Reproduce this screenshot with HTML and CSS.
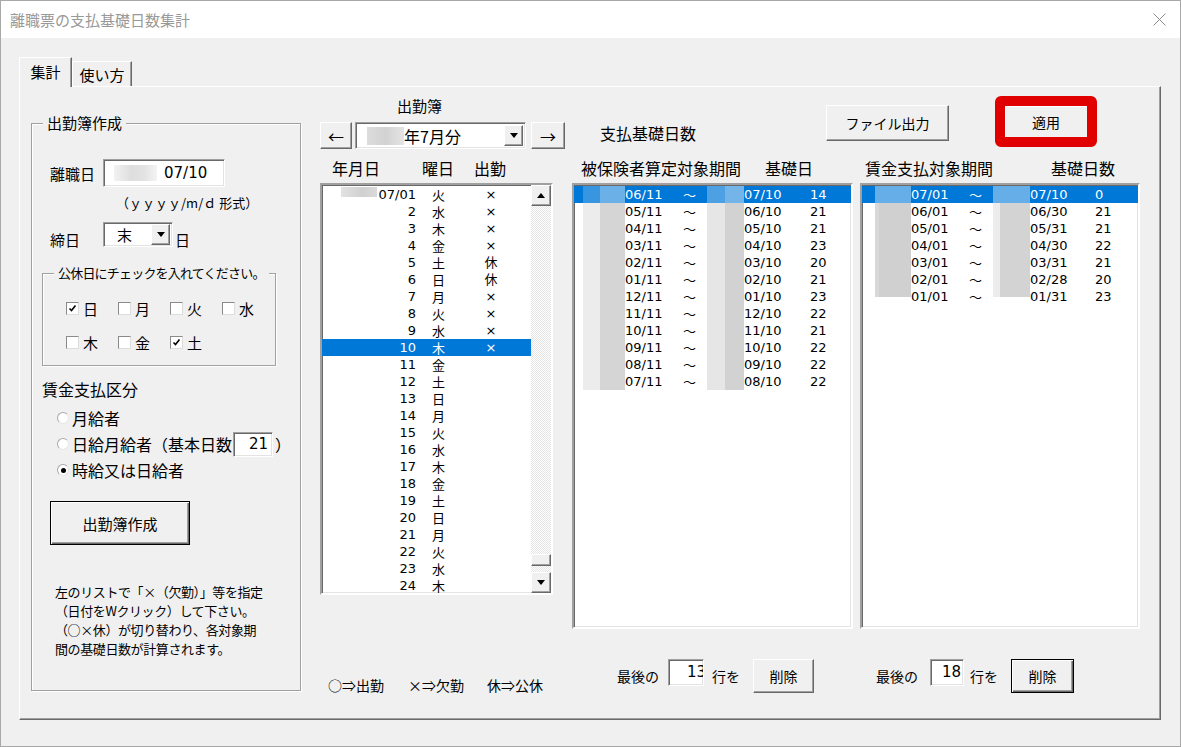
FILE: index.html
```html
<!DOCTYPE html>
<html lang="ja">
<head>
<meta charset="utf-8">
<title>離職票の支払基礎日数集計</title>
<link rel="stylesheet" href="styles.css">
</head>
<body>
<div class="window">
  <div class="titlebar">
    <span class="title">離職票の支払基礎日数集計</span>
    <svg class="close" width="13" height="13" viewBox="0 0 13 13"><path d="M0.5 0.5L12.5 12.5M12.5 0.5L0.5 12.5" stroke="#8c8c8c" stroke-width="1" fill="none"/></svg>
  </div>
  <div class="client">
    <div class="tabs">
      <div class="tab active">集計</div>
      <div class="tab">使い方</div>
    </div>
    <div class="page">

      <!-- left: 出勤簿作成 -->
      <div class="group main-group">
        <span class="legend">出勤簿作成</span>
        <div class="field-row">
          <span class="lbl">離職日</span>
          <div class="textbox date-box"><i class="blur blur-date"></i><span>07/10</span></div>
        </div>
        <div class="hint">（ｙｙｙｙ/m/ｄ 形式）</div>
        <div class="field-row shime-row">
          <span class="lbl lbl-low">締日</span>
          <div class="combo shime-combo">
            <span class="combo-text">末</span>
            <span class="drop-btn"><svg width="8" height="5" viewBox="0 0 8 5"><polygon points="0,0 8,0 4,5" fill="#000"/></svg></span>
          </div>
          <span class="lbl-low after">日</span>
        </div>

        <div class="group holiday-group">
          <span class="legend small">公休日にチェックを入れてください。</span>
          <div class="checks">
            <label class="check"><span class="box on"><svg width="9" height="9" viewBox="0 0 9 9"><path d="M1.5 4.5L3.5 6.5L7.5 1.5" stroke="#000" stroke-width="1.6" fill="none"/></svg></span>日</label>
            <label class="check"><span class="box"></span>月</label>
            <label class="check"><span class="box"></span>火</label>
            <label class="check"><span class="box"></span>水</label>
            <label class="check"><span class="box"></span>木</label>
            <label class="check"><span class="box"></span>金</label>
            <label class="check"><span class="box on"><svg width="9" height="9" viewBox="0 0 9 9"><path d="M1.5 4.5L3.5 6.5L7.5 1.5" stroke="#000" stroke-width="1.6" fill="none"/></svg></span>土</label>
          </div>
        </div>

        <div class="section-title">賃金支払区分</div>
        <div class="radios">
          <div class="radio-row"><span class="radio"></span>月給者</div>
          <div class="radio-row"><span class="radio"></span>日給月給者（基本日数<div class="textbox days-box">21</div><span class="paren">）</span></div>
          <div class="radio-row"><span class="radio on"></span>時給又は日給者</div>
        </div>
        <div class="btn default make-btn">出勤簿作成</div>
        <p class="note">左のリストで「×（欠勤）」等を指定<br>（日付をWクリック）して下さい。<br>（○×休）が切り替わり、各対象期<br>間の基礎日数が計算されます。</p>
      </div>

      <!-- middle: 出勤簿 -->
      <div class="book">
        <div class="book-title">出勤簿</div>
        <div class="nav-row">
          <div class="btn arrow">←</div>
          <div class="combo month-combo">
            <i class="blur blur-month"></i><span class="combo-text">年7月分</span>
            <span class="drop-btn"><svg width="8" height="5" viewBox="0 0 8 5"><polygon points="0,0 8,0 4,5" fill="#000"/></svg></span>
          </div>
          <div class="btn arrow">→</div>
        </div>
        <div class="heads book-heads"><span class="h-date">年月日</span><span class="h-wd">曜日</span><span>出勤</span></div>
        <div class="listbox day-list">
          <div class="rows">
            <div class="day-row"><span class="c-date"><i class="blur blur-year"></i>07/01</span><span class="c-wd">火</span><span class="c-att">×</span></div>
            <div class="day-row"><span class="c-date">2</span><span class="c-wd">水</span><span class="c-att">×</span></div>
            <div class="day-row"><span class="c-date">3</span><span class="c-wd">木</span><span class="c-att">×</span></div>
            <div class="day-row"><span class="c-date">4</span><span class="c-wd">金</span><span class="c-att">×</span></div>
            <div class="day-row"><span class="c-date">5</span><span class="c-wd">土</span><span class="c-att">休</span></div>
            <div class="day-row"><span class="c-date">6</span><span class="c-wd">日</span><span class="c-att">休</span></div>
            <div class="day-row"><span class="c-date">7</span><span class="c-wd">月</span><span class="c-att">×</span></div>
            <div class="day-row"><span class="c-date">8</span><span class="c-wd">火</span><span class="c-att">×</span></div>
            <div class="day-row"><span class="c-date">9</span><span class="c-wd">水</span><span class="c-att">×</span></div>
            <div class="day-row sel"><span class="c-date">10</span><span class="c-wd">木</span><span class="c-att">×</span></div>
            <div class="day-row"><span class="c-date">11</span><span class="c-wd">金</span><span class="c-att"></span></div>
            <div class="day-row"><span class="c-date">12</span><span class="c-wd">土</span><span class="c-att"></span></div>
            <div class="day-row"><span class="c-date">13</span><span class="c-wd">日</span><span class="c-att"></span></div>
            <div class="day-row"><span class="c-date">14</span><span class="c-wd">月</span><span class="c-att"></span></div>
            <div class="day-row"><span class="c-date">15</span><span class="c-wd">火</span><span class="c-att"></span></div>
            <div class="day-row"><span class="c-date">16</span><span class="c-wd">水</span><span class="c-att"></span></div>
            <div class="day-row"><span class="c-date">17</span><span class="c-wd">木</span><span class="c-att"></span></div>
            <div class="day-row"><span class="c-date">18</span><span class="c-wd">金</span><span class="c-att"></span></div>
            <div class="day-row"><span class="c-date">19</span><span class="c-wd">土</span><span class="c-att"></span></div>
            <div class="day-row"><span class="c-date">20</span><span class="c-wd">日</span><span class="c-att"></span></div>
            <div class="day-row"><span class="c-date">21</span><span class="c-wd">月</span><span class="c-att"></span></div>
            <div class="day-row"><span class="c-date">22</span><span class="c-wd">火</span><span class="c-att"></span></div>
            <div class="day-row"><span class="c-date">23</span><span class="c-wd">水</span><span class="c-att"></span></div>
            <div class="day-row"><span class="c-date">24</span><span class="c-wd">木</span><span class="c-att"></span></div>
          </div>
          <div class="vscroll">
            <span class="sb-btn"><svg width="8" height="5" viewBox="0 0 8 5"><polygon points="0,5 8,5 4,0" fill="#000"/></svg></span>
            <span class="sb-track"><span class="sb-thumb"></span></span>
            <span class="sb-btn down"><svg width="8" height="5" viewBox="0 0 8 5"><polygon points="0,0 8,0 4,5" fill="#000"/></svg></span>
          </div>
        </div>
        <div class="marks"><span class="m1">○⇒出勤</span><span class="m2">×⇒欠勤</span><span>休⇒公休</span></div>
      </div>

      <!-- right: 支払基礎日数 -->
      <div class="result">
        <div class="top-row">
          <span class="result-title">支払基礎日数</span>
          <div class="btn file-btn">ファイル出力</div>
          <div class="mark-red"><div class="btn apply-btn">適用</div></div>
        </div>
        <div class="heads result-heads">
          <div class="head-a"><span class="h-span">被保険者算定対象期間</span><span>基礎日</span></div>
          <div class="head-b"><span class="h-span">賃金支払対象期間</span><span>基礎日数</span></div>
        </div>
        <div class="lists">
          <div class="listbox pay-list list-a">
            <div class="pay-row sel"><i class="blur b1"></i><span class="p-from">06/11</span><span class="p-tilde">～</span><i class="blur b2"></i><span class="p-to">07/10</span><span>14</span></div>
            <div class="pay-row"><i class="blur b1"></i><span class="p-from">05/11</span><span class="p-tilde">～</span><i class="blur b2"></i><span class="p-to">06/10</span><span>21</span></div>
            <div class="pay-row"><i class="blur b1"></i><span class="p-from">04/11</span><span class="p-tilde">～</span><i class="blur b2"></i><span class="p-to">05/10</span><span>21</span></div>
            <div class="pay-row"><i class="blur b1"></i><span class="p-from">03/11</span><span class="p-tilde">～</span><i class="blur b2"></i><span class="p-to">04/10</span><span>23</span></div>
            <div class="pay-row"><i class="blur b1"></i><span class="p-from">02/11</span><span class="p-tilde">～</span><i class="blur b2"></i><span class="p-to">03/10</span><span>20</span></div>
            <div class="pay-row"><i class="blur b1"></i><span class="p-from">01/11</span><span class="p-tilde">～</span><i class="blur b2"></i><span class="p-to">02/10</span><span>21</span></div>
            <div class="pay-row"><i class="blur b1"></i><span class="p-from">12/11</span><span class="p-tilde">～</span><i class="blur b2"></i><span class="p-to">01/10</span><span>23</span></div>
            <div class="pay-row"><i class="blur b1"></i><span class="p-from">11/11</span><span class="p-tilde">～</span><i class="blur b2"></i><span class="p-to">12/10</span><span>22</span></div>
            <div class="pay-row"><i class="blur b1"></i><span class="p-from">10/11</span><span class="p-tilde">～</span><i class="blur b2"></i><span class="p-to">11/10</span><span>21</span></div>
            <div class="pay-row"><i class="blur b1"></i><span class="p-from">09/11</span><span class="p-tilde">～</span><i class="blur b2"></i><span class="p-to">10/10</span><span>22</span></div>
            <div class="pay-row"><i class="blur b1"></i><span class="p-from">08/11</span><span class="p-tilde">～</span><i class="blur b2"></i><span class="p-to">09/10</span><span>22</span></div>
            <div class="pay-row"><i class="blur b1"></i><span class="p-from">07/11</span><span class="p-tilde">～</span><i class="blur b2"></i><span class="p-to">08/10</span><span>22</span></div>
          </div>
          <div class="listbox pay-list list-b">
            <div class="pay-row sel"><i class="blur b1"></i><span class="p-from">07/01</span><span class="p-tilde">～</span><i class="blur b2"></i><span class="p-to">07/10</span><span>0</span></div>
            <div class="pay-row"><i class="blur b1"></i><span class="p-from">06/01</span><span class="p-tilde">～</span><i class="blur b2"></i><span class="p-to">06/30</span><span>21</span></div>
            <div class="pay-row"><i class="blur b1"></i><span class="p-from">05/01</span><span class="p-tilde">～</span><i class="blur b2"></i><span class="p-to">05/31</span><span>21</span></div>
            <div class="pay-row"><i class="blur b1"></i><span class="p-from">04/01</span><span class="p-tilde">～</span><i class="blur b2"></i><span class="p-to">04/30</span><span>22</span></div>
            <div class="pay-row"><i class="blur b1"></i><span class="p-from">03/01</span><span class="p-tilde">～</span><i class="blur b2"></i><span class="p-to">03/31</span><span>21</span></div>
            <div class="pay-row"><i class="blur b1"></i><span class="p-from">02/01</span><span class="p-tilde">～</span><i class="blur b2"></i><span class="p-to">02/28</span><span>20</span></div>
            <div class="pay-row"><i class="blur b1 half"></i><span class="p-from">01/01</span><span class="p-tilde">～</span><i class="blur b2 half"></i><span class="p-to">01/31</span><span>23</span></div>
          </div>
        </div>
        <div class="bottom-row">
          <div class="del-a">
            <span class="del-lbl">最後の</span>
            <div class="textbox num-box">13</div>
            <span class="del-lbl2">行を</span>
            <div class="btn del-btn">削除</div>
          </div>
          <div class="del-b">
            <span class="del-lbl">最後の</span>
            <div class="textbox num-box">18</div>
            <span class="del-lbl2">行を</span>
            <div class="btn default del-btn">削除</div>
          </div>
        </div>
      </div>

    </div>
  </div>
</div>
</body>
</html>
```

FILE: styles.css
```css
*{
    box-sizing: border-box;
}
body{
    margin: 0;
    background: #f0f0f0;
    font-family: "Noto Sans CJK JP", sans-serif;
    color: #000;
}
.window{
    width: 1181px;
    height: 747px;
    border: 1px solid #a8a8a8;
    background: #f0f0f0;
    overflow: hidden;
}
.titlebar{
    height: 37px;
    background: #fff;
    display: flex;
    align-items: center;
    justify-content: space-between;
    padding: 0 14px 0 9px;
}
.title{
    font-size: 15px;
    color: #999;
}
.client{
    padding: 19px 0 0 18px;
}

/* tabs */
.tabs{
    display: flex;
    align-items: flex-end;
    height: 29px;
}
.tab{
    width: 60px;
    height: 25px;
    font-size: 15px;
    display: flex;
    align-items: center;
    justify-content: center;
    border-top: 1px solid #fff;
    border-left: 1px solid #fff;
    border-right: 1px solid #696969;
    box-shadow: inset -1px 0 #a0a0a0;
    background: #f0f0f0;
}
.tab.active{
    width: 53px;
    height: 30px;
    margin-bottom: -1px;
    padding-bottom: 3px;
    position: relative;
    z-index: 1;
}
.page{
    width: 1142px;
    height: 634px;
    border-top: 1px solid #fff;
    border-left: 1px solid #fff;
    border-right: 1px solid #696969;
    border-bottom: 1px solid #696969;
    box-shadow: inset -1px -1px #a0a0a0;
    display: flex;
    align-items: flex-start;
    padding-left: 11px;
}

/* common controls */
.group{
    position: relative;
    border: 1px solid #a0a0a0;
    box-shadow: inset 1px 1px #fff, 1px 1px #fff;
}
.legend{
    position: absolute;
    top: -10px;
    left: 11px;
    padding: 0 4px;
    background: #f0f0f0;
    font-size: 15px;
    line-height: 18px;
    white-space: nowrap;
}
.legend.small{
    font-size: 13px;
    letter-spacing: -0.8px;
}
.textbox{
    background: #fff;
    border: 1px solid;
    border-color: #a0a0a0 #fff #fff #a0a0a0;
    box-shadow: inset 1px 1px #696969, inset -1px -1px #e3e3e3;
    font-family: "DejaVu Sans", sans-serif;
    font-size: 15px;
    overflow: hidden;
    white-space: nowrap;
    flex: none;
}
.combo{
    background: #fff;
    border: 1px solid;
    border-color: #a0a0a0 #fff #fff #a0a0a0;
    box-shadow: inset 1px 1px #696969, inset -1px -1px #e3e3e3;
    display: flex;
    align-items: center;
    font-size: 16px;
    flex: none;
}
.drop-btn{
    margin-left: auto;
    margin-right: 2px;
    width: 19px;
    height: 21px;
    display: flex;
    align-items: center;
    justify-content: center;
    background: #f0f0f0;
    border: 1px solid;
    border-color: #fff #696969 #696969 #fff;
    box-shadow: inset -1px -1px #a0a0a0;
}
.btn{
    background: #f0f0f0;
    border: 1px solid;
    border-color: #fff #696969 #696969 #fff;
    box-shadow: inset -1px -1px #a0a0a0;
    display: flex;
    align-items: center;
    justify-content: center;
    font-size: 14px;
    flex: none;
}
.btn.default{
    border: 1px solid #000;
    box-shadow: inset 1px 1px #fff, inset -1px -1px #696969, inset -2px -2px #a0a0a0;
}
.blur{
    display: block;
}

/* left group */
.main-group{
    margin-top: 36px;
    width: 270px;
    height: 568px;
    padding: 35px 0 0 18px;
    flex: none;
}
.field-row{
    display: flex;
    align-items: center;
    height: 28px;
}
.lbl{
    width: 53px;
    font-size: 15px;
}
.date-box{
    width: 122px;
    height: 28px;
    display: flex;
    align-items: center;
    padding-left: 10px;
}
.blur-date{
    width: 43px;
    height: 16px;
    margin-right: 7px;
    background: linear-gradient(to right, #f2f2f2, #dedede 40%, #e2e2e2 70%, #f4f4f4);
}
.hint{
    margin: 7px 0 0 66px;
    font-size: 13px;
    line-height: 18px;
}
.shime-row{
    margin-top: 10px;
    height: 25px;
    align-items: flex-start;
}
.lbl-low{
    margin-top: 9px;
    font-size: 15px;
    line-height: 18px;
}
.lbl.lbl-low{
    width: 53px;
}
.after{
    margin-left: 2px;
}
.shime-combo{
    width: 70px;
    height: 25px;
}
.shime-combo .combo-text{
    padding-left: 13px;
    font-size: 15px;
}
.holiday-group{
    margin: 26px 0 0 -8px;
    width: 234px;
    height: 93px;
    padding: 28px 0 0 23px;
}
.checks{
    display: grid;
    grid-template-columns: repeat(4, 52px);
    row-gap: 21px;
}
.check{
    display: flex;
    align-items: center;
    gap: 4px;
    height: 13px;
    font-size: 15px;
}
.box{
    width: 13px;
    height: 13px;
    flex: none;
    background: #fff;
    border: 1px solid;
    border-color: #8a8a8a #dcdcdc #dcdcdc #8a8a8a;
    display: flex;
    align-items: center;
    justify-content: center;
}
.section-title{
    margin: 13px 0 0 -8px;
    font-size: 16px;
    line-height: 20px;
}
.radios{
    margin: 9px 0 0 7px;
    display: flex;
    flex-direction: column;
    gap: 6px;
}
.radio-row{
    height: 20px;
    display: flex;
    align-items: center;
    font-size: 16px;
    white-space: nowrap;
}
.radio{
    width: 12px;
    height: 12px;
    flex: none;
    margin-right: 3px;
    border-radius: 50%;
    background: #fff;
    border: 1px solid;
    border-color: #a8a8a8 #e6e6e6 #e6e6e6 #a8a8a8;
    display: flex;
    align-items: center;
    justify-content: center;
}
.radio.on::after{
    content: "";
    width: 5px;
    height: 5px;
    border-radius: 50%;
    background: #000;
}
.days-box{
    width: 40px;
    height: 25px;
    margin-left: 1px;
    text-align: right;
    padding: 2px 4px 0 0;
    line-height: 19px;
}
.paren{
    margin-left: 2px;
}
.make-btn{
    margin-top: 21px;
    width: 140px;
    height: 44px;
    font-size: 15px;
}
.note{
    margin: 37px 0 0 5px;
    font-size: 13px;
    letter-spacing: -0.4px;
    line-height: 19px;
}

/* middle: 出勤簿 */
.book{
    margin: 10px 0 0 19px;
    width: 244px;
    flex: none;
}
.book-title{
    padding-left: 77px;
    font-size: 15px;
    line-height: 18px;
}
.nav-row{
    margin-top: 7px;
    height: 27px;
    display: flex;
}
.arrow{
    width: 32px;
    height: 27px;
    font-size: 16px;
}
.arrow:last-child{
    width: 34px;
    margin-left: 5px;
}
.month-combo{
    margin-left: 3px;
    width: 171px;
    height: 27px;
    padding-left: 11px;
}
.blur-month{
    width: 37px;
    height: 18px;
    background: linear-gradient(to right, #dcdcdc, #d2d2d2 50%, #e4e4e4);
}
.heads{
    margin-top: 10px;
    display: flex;
    font-size: 16px;
    line-height: 18px;
}
.book-heads{
    padding-left: 12px;
}
.h-date{
    width: 90px;
}
.h-wd{
    width: 52px;
}
.listbox{
    background: #fff;
    border: 2px solid;
    border-color: #a0a0a0 #fff #fff #a0a0a0;
    box-shadow: inset 1px 1px #696969, inset -1px -1px #e3e3e3;
    font-family: "DejaVu Sans", "Noto Sans CJK JP", sans-serif;
    font-size: 13px;
    overflow: hidden;
}
.day-list{
    margin-top: 6px;
    width: 233px;
    height: 412px;
    display: flex;
    padding: 1px 0 0 0;
}
.rows{
    width: 209px;
    flex: none;
}
.day-row{
    height: 17px;
    line-height: 17px;
    display: flex;
    white-space: nowrap;
}
.day-row.sel, .pay-row.sel{
    background: #0078d7;
    color: #fff;
}
.c-date{
    width: 94px;
    text-align: right;
}
.blur-year{
    display: inline-block;
    width: 36px;
    height: 10px;
    margin-right: 2px;
    vertical-align: top;
    margin-top: 1px;
    background: linear-gradient(to right, #e2e2e2, #d0d0d0 60%, #dadada);
}
.c-wd{
    width: 47px;
    padding-left: 16px;
    font-family: "Noto Sans CJK JP", sans-serif;
    font-size: 13px;
}
.c-att{
    width: 56px;
    text-align: center;
}
.vscroll{
    width: 20px;
    margin-top: -1px;
    display: flex;
    flex-direction: column;
    height: 408px;
}
.sb-btn{
    height: 21px;
    flex: none;
    display: flex;
    align-items: center;
    justify-content: center;
    background: #f0f0f0;
    border: 1px solid;
    border-color: #fff #696969 #696969 #fff;
    box-shadow: inset -1px -1px #a0a0a0;
}
.sb-track{
    flex: 1;
    display: flex;
    flex-direction: column;
    justify-content: flex-end;
    padding-bottom: 6px;
    background: repeating-conic-gradient(#e4e4e4 0 25%, #fff 0 50%) 0 0 / 2px 2px;
}
.sb-thumb{
    height: 12px;
    background: #f0f0f0;
    border: 1px solid;
    border-color: #fff #696969 #696969 #fff;
    box-shadow: inset -1px -1px #a0a0a0;
}
.marks{
    margin-top: 81px;
    padding-left: 8px;
    display: flex;
    font-size: 14px;
    line-height: 18px;
    white-space: nowrap;
}
.m1{
    width: 80px;
}
.m2{
    width: 79px;
}

/* right: 支払基礎日数 */
.result{
    margin: 9px 0 0 8px;
    width: 568px;
    flex: none;
}
.top-row{
    display: flex;
    align-items: flex-start;
    height: 51px;
}
.result-title{
    margin: 28px 0 0 28px;
    width: 226px;
    font-size: 16px;
    line-height: 18px;
}
.file-btn{
    margin-top: 9px;
    width: 123px;
    height: 36px;
}
.mark-red{
    margin-left: 46px;
    width: 102px;
    height: 51px;
    border: 10px solid #e00000;
    border-radius: 6px;
}
.apply-btn{
    width: 100%;
    height: 100%;
    border-color: #fff #f0f0f0 #f0f0f0 #fff;
    box-shadow: none;
}
.result-heads{
    margin-top: 12px;
    gap: 7px;
}
.head-a, .head-b{
    display: flex;
}
.head-a{
    width: 281px;
    padding-left: 9px;
}
.head-a .h-span{
    width: 184px;
}
.head-b{
    padding-left: 5px;
}
.head-b .h-span{
    width: 186px;
}
.lists{
    margin-top: 6px;
    display: flex;
    gap: 7px;
}
.pay-list{
    height: 446px;
    padding-top: 1px;
}
.list-a{
    width: 281px;
}
.list-b{
    width: 280px;
}
.pay-row{
    height: 17px;
    line-height: 17px;
    display: flex;
    white-space: nowrap;
}
.pay-row .b1, .pay-row .b2{
    height: 17px;
    flex: none;
}
.list-a .pay-row{
    padding-left: 9px;
}
.list-b .pay-row{
    padding-left: 13px;
}
.list-a .b1{
    width: 42px;
    background: linear-gradient(to right, #ececec 0 17px, #d5d5d5 17px);
}
.list-a .b2{
    width: 37px;
    background: linear-gradient(to right, #e6e6e6 0 18px, #d2d2d2 18px);
}
.list-b .b1{
    width: 36px;
    background: linear-gradient(to right, #d8d8d8 0 4px, #d0d0d0 4px);
}
.list-b .b2{
    width: 37px;
    background: linear-gradient(to right, #ececec 0 7px, #d3d3d3 7px);
}
.pay-row.sel .b1{
    background: linear-gradient(to right, rgba(255,255,255,.22) 0 17px, rgba(255,255,255,.42) 17px);
}
.pay-row.sel .b2{
    background: linear-gradient(to right, rgba(255,255,255,.3) 0 18px, rgba(255,255,255,.45) 18px);
}
.list-b .pay-row.sel .b1, .list-b .pay-row.sel .b2{
    background: rgba(255,255,255,.4);
}
.pay-row .half{
    height: 9px;
}
.p-from{
    width: 58px;
}
.p-tilde{
    width: 24px;
    font-family: "Noto Sans CJK JP", sans-serif;
}
.list-a .p-to{
    width: 66px;
}
.list-b .p-to{
    width: 65px;
}
.bottom-row{
    margin-top: 30px;
    display: flex;
}
.del-a, .del-b{
    display: flex;
    align-items: flex-start;
}
.del-a{
    width: 288px;
    padding-left: 45px;
}
.del-b{
    padding-left: 16px;
}
.del-lbl, .del-lbl2{
    margin-top: 8px;
    font-size: 14px;
    line-height: 18px;
}
.del-a .del-lbl{
    width: 51px;
}
.del-b .del-lbl{
    width: 54px;
}
.del-lbl2{
    width: 41px;
    margin-left: 8px;
}
.del-b .del-lbl2{
    margin-left: 6px;
}
.num-box{
    width: 36px;
    height: 27px;
    line-height: 25px;
    padding-left: 18px;
}
.del-b .num-box{
    width: 34px;
    padding-left: 11px;
}
.del-btn{
    width: 61px;
    height: 34px;
}
.del-b .del-btn{
    width: 63px;
}
```
